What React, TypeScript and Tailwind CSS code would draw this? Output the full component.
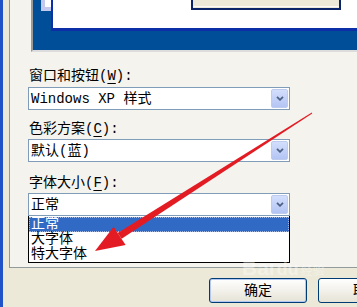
import React from 'react';

const mono = "font-['Liberation_Mono','Noto_Sans_CJK_SC',monospace]";

function Chevron() {
  return (
    <svg width="8" height="5" viewBox="0 0 8 5">
      <path d="M1 0.8 L4 3.8 L7 0.8" fill="none" stroke="#4d6185" strokeWidth="1.8" />
    </svg>
  );
}

function Select({ value }: { value: React.ReactNode }) {
  return (
    <div className="ml-[18px] w-[262px] h-[23px] border border-[#7f9db9] bg-white flex items-center justify-between pl-[2px] pr-[1px]">
      <span className="text-[14px] leading-[16px] text-black whitespace-pre">{value}</span>
      <div className="w-[17px] h-[19px] rounded-[2px] border border-[#bccbee] bg-gradient-to-b from-[#d3defd] to-[#b3c5f4] flex items-center justify-center">
        <Chevron />
      </div>
    </div>
  );
}

function Label({ text, hotkey, className }: { text: string; hotkey: string; className: string }) {
  return (
    <div className={`ml-[19px] h-[16px] text-[14px] leading-[16px] text-black whitespace-pre ${className}`}>
      {text}(<span className="underline underline-offset-[3px]">{hotkey}</span>):
    </div>
  );
}

export default function App() {
  return (
    <div className={`relative w-[357px] h-[307px] overflow-hidden bg-[#ece9d8] flex ${mono}`}>
      {/* window frame */}
      <div className="w-[3px] shrink-0 bg-[#2153c8]" />

      <div className="flex flex-col items-start pl-[6px]">
        {/* tab page */}
        <div className="w-[420px] h-[268px] shrink-0 border-l border-b border-[#919b9c] bg-[#f4f3ee] flex flex-col">
          {/* preview */}
          <div className="ml-[21px] h-[52px] border-l-2 border-l-[#9a9a9a] border-b-2 border-b-[#dcdcdc] bg-[#004e98] flex items-start">
            <div className="w-[8px]" />
            <div className="w-[10px] h-[11px] bg-[#c3c9ef] flex justify-end">
              <div className="w-[6px] h-[7px] bg-white" />
            </div>
            <div className="flex-1 h-[31px] border-l-2 border-b-[3px] border-[#0c2ea6] bg-white">
              <div className="ml-[138px] w-[150px] h-[10px] border-x-2 border-b-2 border-[#0a246a] bg-[#ece9d8]">
                <div className="h-[6px]" />
                <div className="h-[1px] bg-[#fbfaf6]" />
              </div>
            </div>
          </div>

          <Label text="窗口和按钮" hotkey="W" className="mt-[16px]" />
          <div className="mt-[3px]">
            <Select value="Windows XP 样式" />
          </div>

          <Label text="色彩方案" hotkey="C" className="mt-[11px]" />
          <div className="mt-[2px]">
            <Select value="默认(蓝)" />
          </div>

          <Label text="字体大小" hotkey="F" className="mt-[13px]" />
          <div className="mt-[2px]">
            <Select value="正常" />
          </div>
          <div className="ml-[18px] w-[262px] h-[47px] border-x border-b border-black bg-white pt-[1px] text-[14px] leading-[15px]">
            <div className="h-[15px] bg-[#316ac5] text-white pl-[1px] border border-dotted border-[#9fb8e6] leading-[13px]">正常</div>
            <div className="h-[15px] text-black pl-[2px]">大字体</div>
            <div className="h-[15px] text-black pl-[2px]">特大字体</div>
          </div>
        </div>

        {/* dialog buttons */}
        <div className="flex gap-[11px] pl-[200px] pt-[10px]">
          <button className="w-[98px] h-[25px] shrink-0 rounded-[3px] border border-[#003c74] bg-gradient-to-b from-white to-[#e6e3d6] shadow-[inset_0_0_0_1px_#b2c8f2] text-[14px] leading-[16px] text-black">
            确定
          </button>
          <button className="w-[98px] h-[25px] shrink-0 rounded-[3px] border border-[#003c74] bg-gradient-to-b from-white to-[#e6e3d6] text-[14px] leading-[16px] text-black">
            取消
          </button>
        </div>
      </div>

      {/* watermark */}
      <div className="absolute left-[242px] top-[257px] flex items-end gap-[2px] text-white/40 font-['Liberation_Sans','Noto_Sans_CJK_SC',sans-serif] pointer-events-none">
        <span className="text-[21px] font-bold leading-[22px]">Bai</span>
        <span className="text-[18px] font-bold leading-[20px]">du</span>
        <span className="text-[12px] leading-[16px]">经验</span>
      </div>

      {/* red arrow */}
      <svg className="absolute left-0 top-0 pointer-events-none" width="357" height="307" viewBox="0 0 357 307">
        <polygon points="311.8,112.6 312.2,113.4 121.6,238.8 117.6,233" fill="#e31b23" />
        <polygon points="95,251 113.6,226.8 125.6,245" fill="#e31b23" />
      </svg>
    </div>
  );
}
